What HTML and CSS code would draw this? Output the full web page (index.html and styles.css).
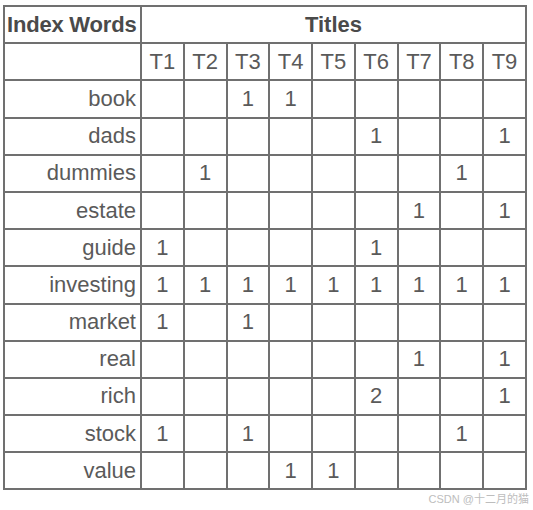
FILE: index.html
```html
<!DOCTYPE html>
<html>
<head>
<meta charset="utf-8">
<link rel="stylesheet" href="styles.css">
</head>
<body>
<div class="page">
<table class="grid">
<colgroup>
<col class="c-word">
<col class="c-t"><col class="c-t"><col class="c-t"><col class="c-t"><col class="c-t"><col class="c-t"><col class="c-t"><col class="c-t"><col class="c-t">
</colgroup>
<tr><th class="hw">Index Words</th><th colspan="9" class="ht">Titles</th></tr>
<tr><td></td><td>T1</td><td>T2</td><td>T3</td><td>T4</td><td>T5</td><td>T6</td><td>T7</td><td>T8</td><td>T9</td></tr>
<tr><td class="w">book</td><td></td><td></td><td>1</td><td>1</td><td></td><td></td><td></td><td></td><td></td></tr>
<tr><td class="w">dads</td><td></td><td></td><td></td><td></td><td></td><td>1</td><td></td><td></td><td>1</td></tr>
<tr><td class="w">dummies</td><td></td><td>1</td><td></td><td></td><td></td><td></td><td></td><td>1</td><td></td></tr>
<tr><td class="w">estate</td><td></td><td></td><td></td><td></td><td></td><td></td><td>1</td><td></td><td>1</td></tr>
<tr><td class="w">guide</td><td>1</td><td></td><td></td><td></td><td></td><td>1</td><td></td><td></td><td></td></tr>
<tr><td class="w">investing</td><td>1</td><td>1</td><td>1</td><td>1</td><td>1</td><td>1</td><td>1</td><td>1</td><td>1</td></tr>
<tr><td class="w">market</td><td>1</td><td></td><td>1</td><td></td><td></td><td></td><td></td><td></td><td></td></tr>
<tr><td class="w">real</td><td></td><td></td><td></td><td></td><td></td><td></td><td>1</td><td></td><td>1</td></tr>
<tr><td class="w">rich</td><td></td><td></td><td></td><td></td><td></td><td>2</td><td></td><td></td><td>1</td></tr>
<tr><td class="w">stock</td><td>1</td><td></td><td>1</td><td></td><td></td><td></td><td></td><td>1</td><td></td></tr>
<tr><td class="w">value</td><td></td><td></td><td></td><td>1</td><td>1</td><td></td><td></td><td></td><td></td></tr>
</table>
<div class="mark">CSDN @十二月的猫</div>
</div>
</body>
</html>
```

FILE: styles.css
```css
html, body {
  margin: 0;
  padding: 0;
  background: #ffffff;
}
.page {
  padding: 5px 0 0 3px;
  width: 530px;
}
.grid {
  border-collapse: collapse;
  table-layout: fixed;
  width: 522px;
  font-family: "Liberation Sans", Arial, sans-serif;
  font-size: 22px;
  color: #5a5a5a;
}
.c-word { width: 137px; }
.c-t { width: 42.78px; }
.grid tr { height: 37.2px; }
.grid th, .grid td {
  border: 2px solid #707070;
  padding: 0;
  text-align: center;
  vertical-align: middle;
  line-height: 24px;
}
.grid th {
  font-weight: bold;
  color: #4a4a4a;
}
.grid th.hw {
  text-align: left;
  padding-left: 2px;
  white-space: nowrap;
  letter-spacing: -0.2px;
}
.grid td.w {
  text-align: right;
  padding-right: 4px;
}
.mark {
  text-align: right;
  padding-right: 4px;
  margin-top: 3px;
  font-family: "Liberation Sans", "Noto Sans CJK SC", sans-serif;
  font-size: 11px;
  line-height: 13px;
  color: #bdbdbd;
}
```
